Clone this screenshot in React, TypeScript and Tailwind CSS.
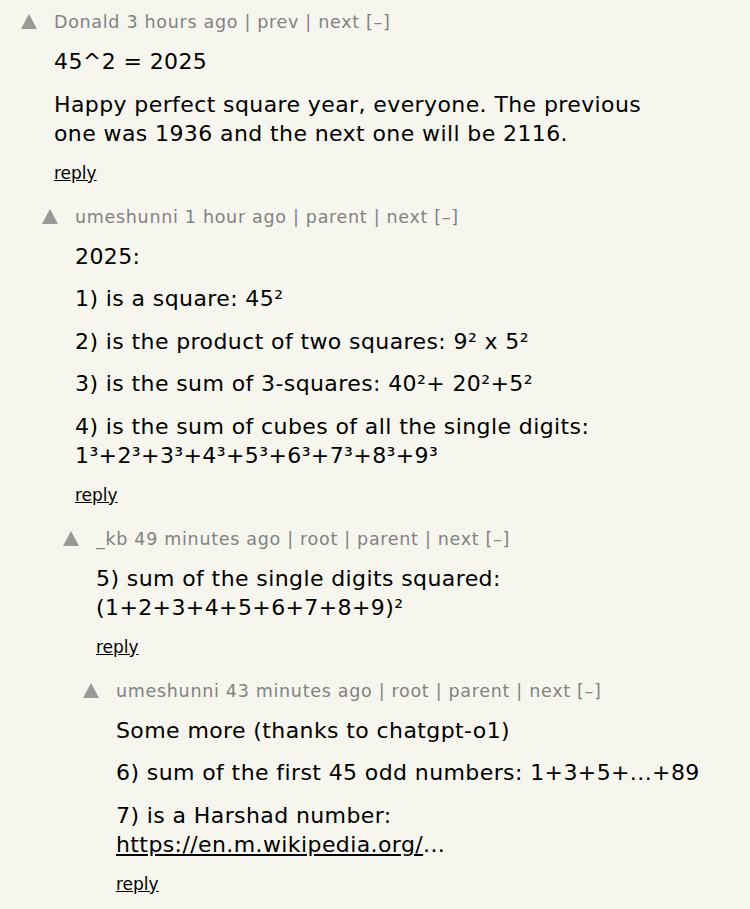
import React from 'react';

type Comment = {
  level: number;
  user: string;
  age: string;
  links: string[];
  paras: React.ReactNode[];
};

const indent = ['pl-0', 'pl-[21px]', 'pl-[42px]', 'pl-[62px]'];

const comments: Comment[] = [
  {
    level: 0,
    user: 'Donald',
    age: '3 hours ago',
    links: ['prev', 'next'],
    paras: [
      '45^2 = 2025',
      <>
        Happy perfect square year, everyone. The previous
        <br />
        one was 1936 and the next one will be 2116.
      </>,
    ],
  },
  {
    level: 1,
    user: 'umeshunni',
    age: '1 hour ago',
    links: ['parent', 'next'],
    paras: [
      '2025:',
      '1) is a square: 45²',
      '2) is the product of two squares: 9² x 5²',
      '3) is the sum of 3-squares: 40²+ 20²+5²',
      <>
        4) is the sum of cubes of all the single digits:
        <br />
        1³+2³+3³+4³+5³+6³+7³+8³+9³
      </>,
    ],
  },
  {
    level: 2,
    user: '_kb',
    age: '49 minutes ago',
    links: ['root', 'parent', 'next'],
    paras: [
      <>
        5) sum of the single digits squared:
        <br />
        (1+2+3+4+5+6+7+8+9)²
      </>,
    ],
  },
  {
    level: 3,
    user: 'umeshunni',
    age: '43 minutes ago',
    links: ['root', 'parent', 'next'],
    paras: [
      'Some more (thanks to chatgpt-o1)',
      '6) sum of the first 45 odd numbers: 1+3+5+...+89',
      <>
        7) is a Harshad number:
        <br />
        <span className="underline">https://en.m.wikipedia.org/</span>...
      </>,
    ],
  },
];

const Upvote = () => (
  <svg width="16" height="15" viewBox="0 0 16 15" className="shrink-0 mt-[4px]">
    <polygon points="8,0 16,15 0,15" fill="#999999" />
  </svg>
);

const CommentRow = ({ c }: { c: Comment }) => (
  <div className={`${indent[c.level]} flex pb-[20px]`}>
    <div className="ml-[21px] w-[33px] shrink-0">
      <Upvote />
    </div>
    <div className="flex-1 whitespace-nowrap">
      <div className="text-[17.5px] leading-[24px] tracking-[0.7px] text-[#828282]">
        {c.user} {c.age} | {c.links.join(' | ')} [–]
      </div>
      <div className="mt-[13px] text-[22px] leading-[29px] tracking-[0.4px] text-black flex flex-col gap-[13.5px]">
        {c.paras.map((p, i) => (
          <p key={i}>{p}</p>
        ))}
      </div>
      <div className="mt-[13px] text-[17px] leading-[24px] text-black underline">reply</div>
    </div>
  </div>
);

export default function App() {
  return (
    <div
      className="min-h-[909px] w-[750px] bg-[#f6f6ef] pt-[10px] overflow-hidden"
      style={{ fontFamily: '"DejaVu Sans", Verdana, sans-serif' }}
    >
      {comments.map((c, i) => (
        <CommentRow key={i} c={c} />
      ))}
    </div>
  );
}
